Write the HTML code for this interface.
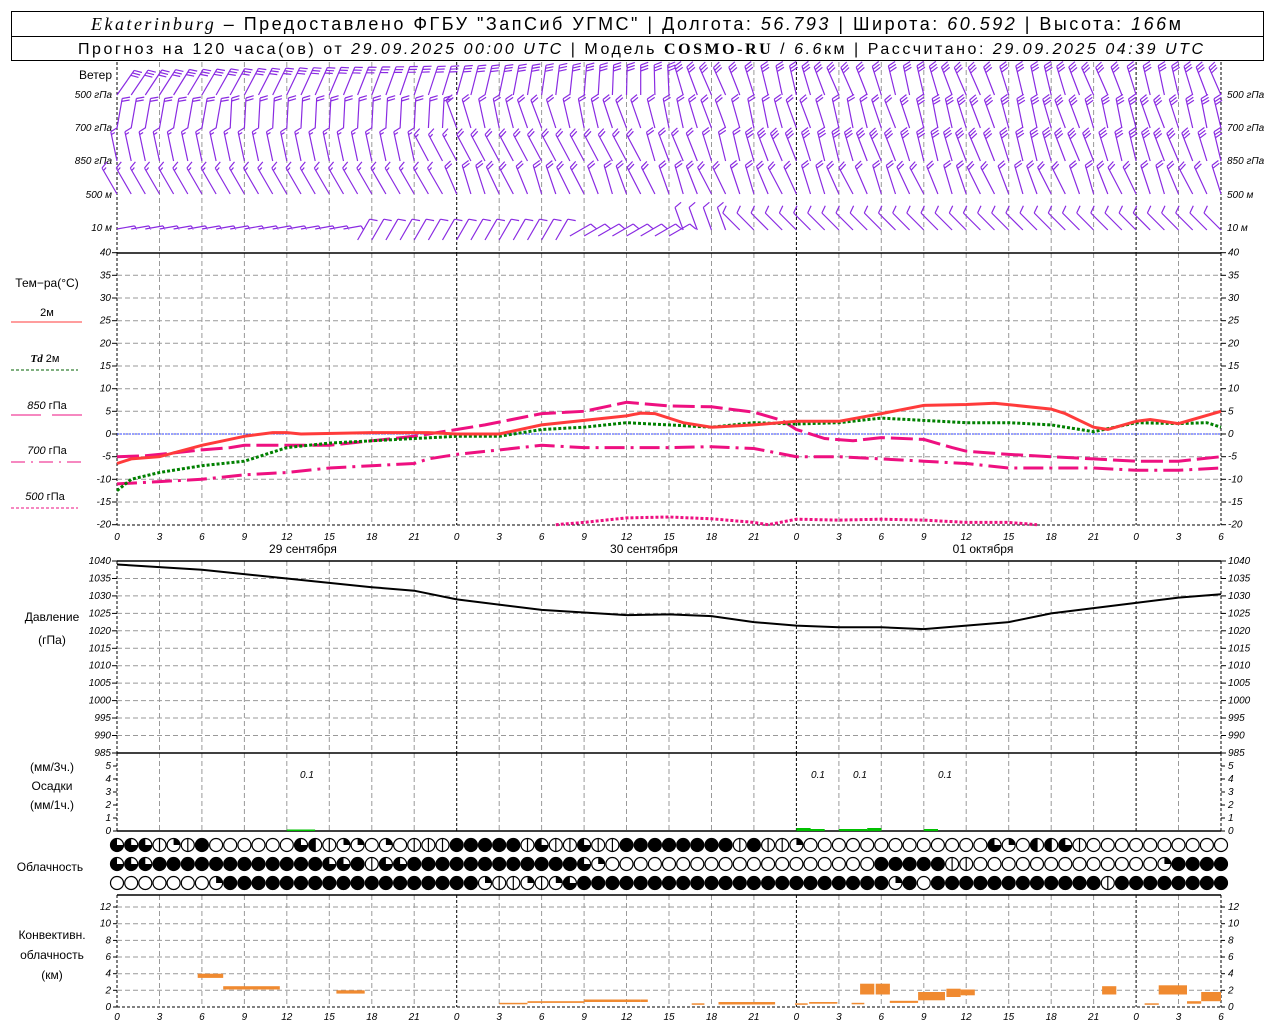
<!DOCTYPE html>
<html><head><meta charset="utf-8"><style>
html,body{margin:0;padding:0;background:#fff;width:1280px;height:1024px;overflow:hidden}
svg{display:block}
text{font-family:"Liberation Sans",sans-serif}
.ax{font-family:"Liberation Sans",sans-serif;font-style:italic;font-size:10px}
.lb{font-size:12px}
</style></head><body>
<div id="c"></div>
<script>
var X0=117,PH=14.154,s=[];
function hx(h){return X0+h*PH}
function L(x1,y1,x2,y2,st){s.push('<line x1="'+x1.toFixed(1)+'" y1="'+y1.toFixed(1)+'" x2="'+x2.toFixed(1)+'" y2="'+y2.toFixed(1)+'" '+st+'/>')}
function T(x,y,t,st){s.push('<text x="'+x+'" y="'+y+'" '+(st||'')+'>'+t+'</text>')}
s.push('<rect x="11.5" y="11.5" width="1252" height="49" fill="none" stroke="#000"/>');
L(11,36.5,1264,36.5,'stroke="#000"');
s.push('<text x="91" y="30" font-size="18" textLength="1090" lengthAdjust="spacing"><tspan font-family="Liberation Serif" font-style="italic">Ekaterinburg</tspan> – Предоставлено ФГБУ "ЗапСиб УГМС" | Долгота: <tspan font-style="italic">56.793</tspan> | Широта: <tspan font-style="italic">60.592</tspan> | Высота: <tspan font-style="italic">166</tspan>м</text>');
s.push('<text x="78" y="54" font-size="16" textLength="1125" lengthAdjust="spacing">Прогноз на 120 часа(ов) от <tspan font-style="italic">29.09.2025 00:00 UTC</tspan>  | Модель <tspan font-family="Liberation Serif" font-weight="bold">COSMO-RU</tspan> / <tspan font-style="italic">6.6</tspan>км | Рассчитано: <tspan font-style="italic">29.09.2025 04:39 UTC</tspan></text>');
function vgrid(y1,y2){for(var i=0;i<=26;i++){var x=X0+i*3*PH;var day=(i%8==0)||i==26;L(x,y1,x,y2,'stroke="'+(day?'#000':'#999')+'" stroke-dasharray="'+(day?'3,2':'5,3')+'"')}}
function hgrid(y){L(X0,y,hx(78),y,'stroke="#999" stroke-dasharray="5,3"')}
vgrid(62,253);vgrid(253,525);vgrid(561,753);vgrid(753,831);vgrid(895,1007);
for(var v=-20;v<=40;v+=5){var y=434-v*4.533;if(v>-20&&v<40)hgrid(y);T(111,y+3,v,'class="ax" text-anchor="end"');T(1228,y+3,v,'class="ax"');L(112,y,117,y,'stroke="#000"');L(1221,y,1226,y,'stroke="#000"')}
L(X0,434,hx(78),434,'stroke="#3040ff" stroke-dasharray="2,1"');
for(var p=985;p<=1040;p+=5){var y=561+(1040-p)*3.49;if(p>985&&p<1040)hgrid(y);T(111,y+3,p,'class="ax" text-anchor="end"');T(1228,y+3,p,'class="ax"');L(112,y,117,y,'stroke="#000"');L(1221,y,1226,y,'stroke="#000"')}
for(var k=0;k<=5;k++){var y=831-k*13;T(111,y+3,k,'class="ax" text-anchor="end"');T(1228,y+3,k,'class="ax"');L(113,y,117,y,'stroke="#000"');L(1221,y,1225,y,'stroke="#000"')}
for(var k=0;k<=12;k+=2){var y=1007-k*8.33;if(k>0)hgrid(y);T(111,y+3,k,'class="ax" text-anchor="end"');T(1228,y+3,k,'class="ax"');L(113,y,117,y,'stroke="#000"');L(1221,y,1225,y,'stroke="#000"')}
[253,561,753,831,895].forEach(function(a){L(X0,a,hx(78),a,'stroke="#000" stroke-width="1.5"')});
L(X0,525,hx(78),525,'stroke="#000" stroke-dasharray="3,2"');L(X0,1007,hx(78),1007,'stroke="#000" stroke-dasharray="3,2"');
var hl=[0,3,6,9,12,15,18,21];
function taxis(y){for(var i=0;i<=26;i++){T(hx(i*3).toFixed(1),y,hl[i%8],'class="ax" font-size="13" text-anchor="middle"')}}
taxis(540);taxis(1020);
T(303,553,'29 сентября','class="lb" text-anchor="middle" font-size="13"');T(644,553,'30 сентября','class="lb" text-anchor="middle" font-size="13"');T(983,553,'01 октября','class="lb" text-anchor="middle" font-size="13"');
T(112,79,'Ветер','class="lb" text-anchor="end" font-size="11"');
var wl=[['500 гПа',98],['700 гПа',131],['850 гПа',164],['500 м',198],['10  м',231]];
wl.forEach(function(w){T(112,w[1],w[0],'class="ax" text-anchor="end"');T(1227,w[1],w[0],'class="ax"')});
T(47,287,'Тем−ра(°С)','class="lb" text-anchor="middle"');
T(47,316,'2м','font-size="11" text-anchor="middle"');L(11,322,82,322,'stroke="#ff3b3b"');
T(45,362,'<tspan font-style="italic" font-weight="bold" font-family="Liberation Serif">Td</tspan>  2м','font-size="11" text-anchor="middle"');L(11,370,78,370,'stroke="#006000" stroke-dasharray="3,2"');
T(47,409,'<tspan font-style="italic">850</tspan> гПа','font-size="11" text-anchor="middle"');L(11,415,82,415,'stroke="#ee1080" stroke-dasharray="30,11"');
T(47,454,'<tspan font-style="italic">700</tspan> гПа','font-size="11" text-anchor="middle"');L(11,462,82,462,'stroke="#ee1080" stroke-dasharray="14,6,2,6"');
T(45,500,'<tspan font-style="italic">500</tspan> гПа','font-size="11" text-anchor="middle"');L(11,508,78,508,'stroke="#ee1080" stroke-dasharray="3,2"');
T(52,621,'Давление','class="lb" text-anchor="middle"');T(52,644,'(гПа)','class="lb" text-anchor="middle"');
T(52,771,'(мм/3ч.)','class="lb" text-anchor="middle"');T(52,790,'Осадки','class="lb" text-anchor="middle"');T(52,809,'(мм/1ч.)','class="lb" text-anchor="middle"');
T(50,871,'Облачность','class="lb" text-anchor="middle"');
T(52,939,'Конвективн.','class="lb" text-anchor="middle"');T(52,959,'облачность','class="lb" text-anchor="middle"');T(52,979,'(км)','class="lb" text-anchor="middle"');
[307,818,860,945].forEach(function(a){T(a,778,'0.1','class="ax" font-size="13" text-anchor="middle"')});
function curve(pts,yf,st){var o=[];for(var i=0;i<pts.length;i+=2)o.push(hx(pts[i]).toFixed(1)+','+yf(pts[i+1]).toFixed(1));s.push('<polyline fill="none" points="'+o.join(' ')+'" '+st+'/>')}
function ty(v){return 434-v*4.533}
curve([31,-20,33,-19.5,36,-18.5,39,-18.3,42,-18.7,45,-19.5,46,-20,48,-18.8,51,-19,54,-18.8,57,-19,60,-19.5,63,-19.5,65,-20],ty,'stroke="#ee1080" stroke-width="3" stroke-dasharray="3,2"');
curve([0,-11,3,-10.5,6,-10,9,-9,12,-8.5,15,-7.5,18,-7,21,-6.5,22,-5.5,24,-4.5,27,-3.5,30,-2.5,33,-3,36,-3,39,-3,42,-2.8,45,-3.2,48,-5,51,-5,54,-5.5,57,-6,60,-6.5,63,-7.5,66,-7.5,69,-7.5,72,-8,75,-8,78,-7.5],ty,'stroke="#ee1080" stroke-width="3" stroke-dasharray="20,6,3,6"');
curve([0,-5,2,-4.8,3,-4.5,6,-3.5,8,-3,9,-2.5,12,-2.5,15,-2.5,18,-1.5,21,-0.5,24,1,26,2,30,4.5,33,5,36,7,39,6.2,42,6,45,4.8,47,3,48,1,50,-1,52,-1.5,54,-0.8,57,-1.2,59,-3,60,-3.8,63,-4.5,66,-5,69,-5.5,72,-6,75,-6,78,-5],ty,'stroke="#ee1080" stroke-width="3" stroke-dasharray="22,6"');
curve([0,-12.5,1,-10,3,-8.5,6,-7,9,-6,12,-3,15,-2,18,-1.5,21,-1,24,-0.5,27,-0.5,30,1,33,1.5,36,2.5,39,2,42,1.5,45,2.5,48,2.2,51,2.5,54,3.5,57,3,60,2.5,63,2.5,66,2,69,0.5,72,2.5,75,2.3,77,2.5,78,1.5],ty,'stroke="#008000" stroke-width="3" stroke-dasharray="3,2"');
curve([0,-6.5,1,-5.5,3,-5,6,-2.5,9,-0.5,11,0.3,12,0.3,13,0,18,0.3,22,0.3,24,0,27,0,30,2,33,3,36,4,37,4.6,38,4.5,40,2.5,42,1.5,45,2,48,2.8,51,2.8,54,4.5,57,6.3,60,6.5,62,6.8,66,5.5,67,4.5,69,1.5,70,1,72,2.8,73,3.2,75,2.3,78,5],ty,'stroke="#ff3b3b" stroke-width="3"');
curve([0,1039,6,1037.5,12,1035,18,1032.5,21,1031.5,24,1029,30,1026,36,1024.5,39,1024.7,42,1024.2,45,1022.5,48,1021.5,51,1021,54,1021,57,1020.5,60,1021.5,63,1022.5,66,1025,69,1026.5,72,1028,75,1029.5,78,1030.5],function(p){return 561+(1040-p)*3.49},'stroke="#000" stroke-width="2"');
[[12,14,1.5],[48,49,3],[49,50,2],[51,53,2],[53,54,3],[57,58,2]].forEach(function(b){s.push('<rect x="'+hx(b[0]).toFixed(1)+'" y="'+(831-b[2])+'" width="'+((b[1]-b[0])*PH).toFixed(1)+'" height="'+b[2]+'" fill="#00c000"/>')});
var cb=[[5.7,7.5,3.5,4],[7.5,11.5,2.1,2.5],[15.5,17.5,1.6,2.0],[27,29,0.4,0.5],[29,33,0.5,0.7],[33,37,0.6,0.9],[37,37.5,0.6,0.9],[40.6,41.5,0.3,0.45],[42.5,46.5,0.3,0.6],[47.9,48.8,0.3,0.45],[48.9,50.9,0.4,0.6],[51.9,52.8,0.35,0.5],[52.5,53.5,1.5,2.8],[53.6,54.6,1.5,2.8],[54.6,56.6,0.5,0.75],[56.6,58.5,0.8,1.8],[58.6,59.6,1.2,2.2],[59.6,60.6,1.4,2.1],[69.6,70.6,1.5,2.5],[72.6,73.6,0.3,0.45],[73.6,75.6,1.5,2.6],[75.6,76.6,0.4,0.7],[76.6,78,0.7,1.8]];
cb.forEach(function(b){var y1=1007-b[3]*8.33,y2=1007-b[2]*8.33;s.push('<rect x="'+hx(b[0]).toFixed(1)+'" y="'+y1.toFixed(1)+'" width="'+((b[1]-b[0])*PH).toFixed(1)+'" height="'+Math.max(1.5,y2-y1).toFixed(1)+'" fill="#f08a30"/>')});
var rows=[
"tttvqvfoooooothvqqoqovvvfffffvtvvtvvffffffffvfvvqoooooooooooootqohhtvooooooooooooohthhttqvv",
"tttffffffffffffttfvttfffffffffffftqooooooooooooooooooofffffvvoooooooooooooqfffftttetff",
"oooooooqffffffffffffffffffqvvqvqtffffffffffffffffffffffqfoffffffffffffvffffffffffqoooqffffffff"];
function circ(cx,cy,t){var r=6.5,c=function(n){return n.toFixed(1)};var o='<circle cx="'+c(cx)+'" cy="'+cy+'" r="'+r+'" fill="'+(t=='f'?'#000':'#fff')+'" stroke="#000" stroke-width="1.2"/>';
if(t=='h'||t=='v'){o+='<line x1="'+c(cx)+'" y1="'+c(cy-r)+'" x2="'+c(cx)+'" y2="'+c(cy+r)+'" stroke="#000" stroke-width="1.2"/>'}
if(t=='h')o+='<path d="M'+c(cx)+','+c(cy-r)+'A'+r+','+r+' 0 0,0 '+c(cx)+','+c(cy+r)+'Z"/>';
if(t=='q')o+='<path d="M'+c(cx)+','+cy+'L'+c(cx)+','+c(cy-r)+'A'+r+','+r+' 0 0,1 '+c(cx+r)+','+cy+'Z"/>';
if(t=='t')o+='<path d="M'+c(cx)+','+cy+'L'+c(cx)+','+c(cy-r)+'A'+r+','+r+' 0 1,0 '+c(cx+r)+','+cy+'Z"/>';
if(t=='e')o+='<line x1="'+c(cx-r)+'" y1="'+cy+'" x2="'+c(cx+r)+'" y2="'+cy+'" stroke="#000"/><path d="M'+c(cx-r)+','+cy+'A'+r+','+r+' 0 0,0 '+c(cx+r)+','+cy+'Z"/>';
return o}
for(var rI=0;rI<3;rI++){var st=rows[rI];for(var h=0;h<=78;h++){s.push(circ(hx(h),[845,864,883][rI],st[h]||'o'))}}
function barb(x,y,a,n,len){var r=a*Math.PI/180,dx=Math.sin(r),dy=-Math.cos(r);var tx=x+dx*len,ty2=y+dy*len;var o='M'+x.toFixed(1)+','+y.toFixed(1)+'L'+tx.toFixed(1)+','+ty2.toFixed(1);
var br=r+70*Math.PI/180,bx=Math.sin(br),by=-Math.cos(br);
for(var i=0;i<n;i+=1){var bl=(n-i>=1)?8:4;var px=tx-dx*i*3,py=ty2-dy*i*3;o+='M'+px.toFixed(1)+','+py.toFixed(1)+'l'+(bx*bl).toFixed(1)+','+(by*bl).toFixed(1)}
return o}
var d='';
for(var h=0;h<=78;h++){var x=hx(h);
var a5=h<22?35-h*0.8:h<40?18-(h-22)*1.2:-18+6*Math.sin(h*0.7);
d+=barb(x,95,a5,3,30);
var a7=h<24?(h<8?10:3):(-16+5*Math.sin(h));d+=barb(x,128,a7,h<24?2:(h>55?3:2),30);
var a8=h<22?-12:h<38?-28:-18+5*Math.sin(h*0.9);d+=barb(x,161,a8,h<25?1.5:(h>44?3:2),30);
var a9=h<24?-30:-22+6*Math.sin(h*1.3);d+=barb(x,194,a9,h<24?1.5:2,30);
var a10,l10=24,b10=240;if(h<17){a10=80;l10=18;b10=229}else if(h<32){a10=30}else if(h<40){a10=60;b10=236}else if(h<44){a10=-20;b10=230}else{a10=-45;b10=230}
d+=barb(x,b10,a10,h<17?0.5:1,l10);}
s.push('<path d="'+d+'" fill="none" stroke="#8a2be2" stroke-width="1.2"/>');
document.getElementById('c').innerHTML='<svg width="1280" height="1024" xmlns="http://www.w3.org/2000/svg">'+s.join('')+'</svg>';
</script>
</body></html>
